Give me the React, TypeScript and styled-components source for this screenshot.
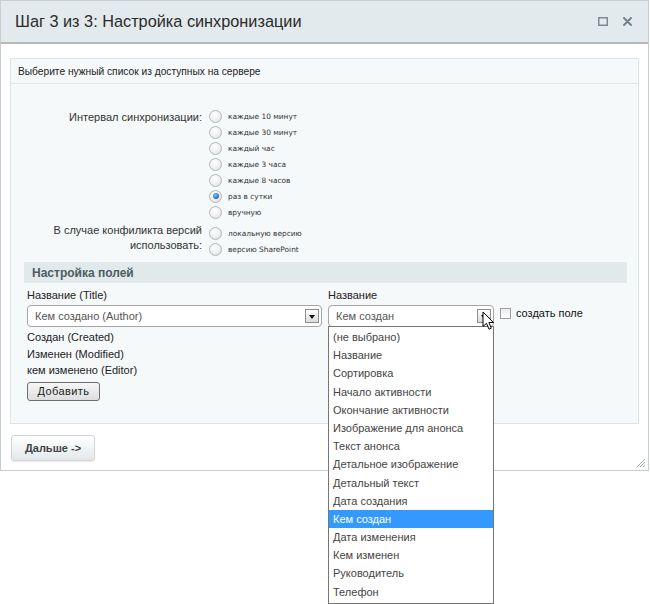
import React from 'react';
import styled, { createGlobalStyle } from 'styled-components';

const Global = createGlobalStyle`
  html, body { margin: 0; padding: 0; background: #fff; }
  body { font-family: "Liberation Sans", Arial, sans-serif; font-size: 11px; color: #333; }
`;

const Page = styled.div`
  position: relative;
  width: 650px;
  height: 604px;
  overflow: hidden;
`;

const Dialog = styled.div`
  position: relative;
  width: 649px;
  height: 471px;
  box-sizing: border-box;
  border: 1px solid #c8cdcf;
  background: #fff;
  display: flex;
  flex-direction: column;
`;

const Header = styled.div`
  height: 41px;
  flex: none;
  background: #e2eaed;
  border-bottom: 2px solid #b4babc;
  display: flex;
  align-items: center;
  justify-content: space-between;
  padding: 0 16px 0 14px;
`;

const Title = styled.h1`
  margin: 0;
  font-weight: normal;
  font-size: 16.3px;
  color: #2b2b2b;
`;

const HeaderIcons = styled.div`
  display: flex;
  align-items: center;
  gap: 15px;
`;

const Body = styled.div`
  padding: 14px 9px 0 9px;
`;

const Panel = styled.div`
  border: 1px solid #dbe4e7;
  background: #f5f9fa;
  padding-bottom: 22px;
`;

const PanelHead = styled.div`
  height: 24px;
  border-bottom: 1px solid #dfe7ea;
  display: flex;
  align-items: center;
  padding-left: 7px;
  font-size: 10.2px;
  color: #222;
`;

const Form = styled.div`
  display: grid;
  grid-template-columns: 191px auto;
  column-gap: 7px;
  padding-top: 24px;
`;

const Label = styled.div<{ $top?: number }>`
  text-align: right;
  font-size: 11px;
  color: #333;
  line-height: 15px;
  padding-top: ${(p) => p.$top ?? 0}px;
`;

const RadioGroup = styled.div<{ $mt?: number }>`
  display: flex;
  flex-direction: column;
  margin-top: ${(p) => p.$mt ?? 0}px;
`;

const RadioRow = styled.div`
  height: 16px;
  display: flex;
  align-items: center;
  gap: 6px;
  font-family: "DejaVu Sans", Verdana, sans-serif;
  font-size: 7.4px;
  color: #333;
`;

const Radio = styled.span<{ $checked?: boolean }>`
  width: 11px;
  height: 11px;
  border-radius: 50%;
  border: 1px solid #b3b7b9;
  background: radial-gradient(circle at 40% 35%, #ffffff 0%, #f0f0f0 50%, #d8dadb 100%);
  display: flex;
  align-items: center;
  justify-content: center;
  flex: none;
  &::after {
    content: '';
    display: ${(p) => (p.$checked ? 'block' : 'none')};
    width: 6px;
    height: 6px;
    border-radius: 50%;
    background: radial-gradient(circle at 40% 35%, #7fc0f0 0%, #2a78c8 60%, #174f8f 100%);
  }
`;

const SectionBar = styled.div`
  margin: 5px 11px 0 13px;
  height: 21px;
  background: #e1e9eb;
  display: flex;
  align-items: center;
  padding-left: 8px;
  font-weight: bold;
  font-size: 12px;
  color: #4d5c61;
`;

const Fields = styled.div`
  margin-top: 4px;
  padding-left: 16px;
  display: grid;
  grid-template-columns: 295px 166px auto;
  column-gap: 6px;
  align-items: start;
`;

const FieldLabel = styled.div`
  height: 16px;
  line-height: 16px;
  margin-bottom: 2px;
  color: #222;
`;

const SelectBox = styled.div`
  position: relative;
  height: 20px;
  border: 1px solid #a6a6a6;
  border-radius: 4px;
  background: #fff;
  display: flex;
  align-items: center;
  padding-left: 7px;
  color: #555;
  font-size: 11px;
`;

const SelectArrow = styled.span`
  position: absolute;
  right: 2px;
  top: 3px;
  width: 12px;
  height: 12px;
  border: 1px solid #8e8e8e;
  background: linear-gradient(#fdfdfd, #dcdcdc);
  display: flex;
  align-items: center;
  justify-content: center;
  &::after {
    content: '';
    width: 0;
    height: 0;
    border-left: 3px solid transparent;
    border-right: 3px solid transparent;
    border-top: 4px solid #111;
    margin-top: 1px;
  }
`;

const Column = styled.div`
  position: relative;
  display: flex;
  flex-direction: column;
`;

const PlainRow = styled.div`
  height: 16.5px;
  line-height: 16px;
  color: #222;
`;

const RowsBlock = styled.div`
  margin-top: 2px;
`;

const SmallButton = styled.button`
  margin-top: 3px;
  width: 73px;
  height: 19px;
  border: 1px solid #6f6f6f;
  border-radius: 3px;
  background: linear-gradient(#f6f6f6, #dedede);
  font-family: "Liberation Sans", Arial, sans-serif;
  font-size: 11px;
  color: #222;
  padding: 0;
  letter-spacing: 0.4px;
`;

const CheckWrap = styled.div`
  margin-top: 16px;
  display: flex;
  align-items: center;
  gap: 5px;
  height: 20px;
  color: #111;
`;

const Checkbox = styled.span`
  width: 9px;
  height: 9px;
  border: 1px solid #9d9d9d;
  background: linear-gradient(#ededed, #ffffff);
  flex: none;
`;

const DropList = styled.div`
  position: absolute;
  left: -1px;
  top: 100%;
  width: calc(100% + 2px);
  box-sizing: border-box;
  border: 1px solid #767676;
  background: #fff;
  padding: 1px 0 2px;
  z-index: 5;
`;

const DropItem = styled.div<{ $active?: boolean }>`
  height: 18.2px;
  line-height: 18px;
  padding-left: 4px;
  font-size: 11px;
  color: ${(p) => (p.$active ? '#fff' : '#444')};
  background: ${(p) => (p.$active ? '#3399ff' : 'transparent')};
`;

const Cursor = styled.svg`
  position: absolute;
  right: -2px;
  top: 5px;
  z-index: 6;
`;

const Footer = styled.div`
  padding: 11px 0 0 10px;
`;

const NextButton = styled.button`
  width: 84px;
  height: 26px;
  border: 1px solid #cfd5d7;
  border-radius: 3px;
  background: linear-gradient(#ffffff, #e2e8ea);
  box-shadow: 0 1px 1px rgba(0, 0, 0, 0.08);
  font-family: "Liberation Sans", Arial, sans-serif;
  font-weight: bold;
  font-size: 11px;
  color: #3d4447;
  padding: 0;
`;

const Grip = styled.svg`
  position: absolute;
  right: 2px;
  bottom: 2px;
`;

const intervals = [
  'каждые 10 минут',
  'каждые 30 минут',
  'каждый час',
  'каждые 3 часа',
  'каждые 8 часов',
  'раз в сутки',
  'вручную',
];

const options = [
  '(не выбрано)',
  'Название',
  'Сортировка',
  'Начало активности',
  'Окончание активности',
  'Изображение для анонса',
  'Текст анонса',
  'Детальное изображение',
  'Детальный текст',
  'Дата создания',
  'Кем создан',
  'Дата изменения',
  'Кем изменен',
  'Руководитель',
  'Телефон',
];

export default function App() {
  return (
    <Page>
      <Global />
      <Dialog>
        <Header>
          <Title>Шаг 3 из 3: Настройка синхронизации</Title>
          <HeaderIcons>
            <svg width="10" height="9" viewBox="0 0 10 9">
              <rect x="0.75" y="0.75" width="8.5" height="7.5" fill="none" stroke="#7d8b90" strokeWidth="1.5" />
            </svg>
            <svg width="9" height="9" viewBox="0 0 9 9">
              <path d="M1 1L8 8M8 1L1 8" stroke="#6f7f85" strokeWidth="1.8" strokeLinecap="round" />
            </svg>
          </HeaderIcons>
        </Header>
        <Body>
          <Panel>
            <PanelHead>Выберите нужный список из доступных на сервере</PanelHead>
            <Form>
              <Label $top={2}>Интервал синхронизации:</Label>
              <RadioGroup>
                {intervals.map((t) => (
                  <RadioRow key={t}>
                    <Radio $checked={t === 'раз в сутки'} />
                    {t}
                  </RadioRow>
                ))}
              </RadioGroup>
              <Label $top={3}>
                В случае конфиликта версий
                <br />
                использовать:
              </Label>
              <RadioGroup $mt={5}>
                <RadioRow>
                  <Radio />
                  локальную версию
                </RadioRow>
                <RadioRow>
                  <Radio />
                  версию SharePoint
                </RadioRow>
              </RadioGroup>
            </Form>
            <SectionBar>Настройка полей</SectionBar>
            <Fields>
              <Column>
                <FieldLabel>Название (Title)</FieldLabel>
                <SelectBox>
                  Кем создано (Author)
                  <SelectArrow />
                </SelectBox>
                <RowsBlock>
                  <PlainRow>Создан (Created)</PlainRow>
                  <PlainRow>Изменен (Modified)</PlainRow>
                  <PlainRow>кем изменено (Editor)</PlainRow>
                </RowsBlock>
                <div>
                  <SmallButton>Добавить</SmallButton>
                </div>
              </Column>
              <Column>
                <FieldLabel>Название</FieldLabel>
                <SelectBox>
                  Кем создан
                  <SelectArrow />
                  <Cursor width="13" height="20" viewBox="0 0 13 20">
                    <path
                      d="M1 1 L1 15.5 L4.5 12.3 L7 18.2 L9.3 17.2 L6.9 11.5 L11.5 11.5 Z"
                      fill="#fff"
                      stroke="#000"
                      strokeWidth="1"
                      strokeLinejoin="round"
                    />
                  </Cursor>
                  <DropList>
                    {options.map((o) => (
                      <DropItem key={o} $active={o === 'Кем создан'}>
                        {o}
                      </DropItem>
                    ))}
                  </DropList>
                </SelectBox>
              </Column>
              <CheckWrap>
                <Checkbox />
                создать поле
              </CheckWrap>
            </Fields>
          </Panel>
        </Body>
        <Footer>
          <NextButton>Дальше -&gt;</NextButton>
        </Footer>
        <Grip width="11" height="11" viewBox="0 0 11 11">
          <path d="M10 2L2 10M10 5L5 10M10 8L8 10" stroke="#a8a8a8" strokeWidth="1" />
        </Grip>
      </Dialog>
    </Page>
  );
}
